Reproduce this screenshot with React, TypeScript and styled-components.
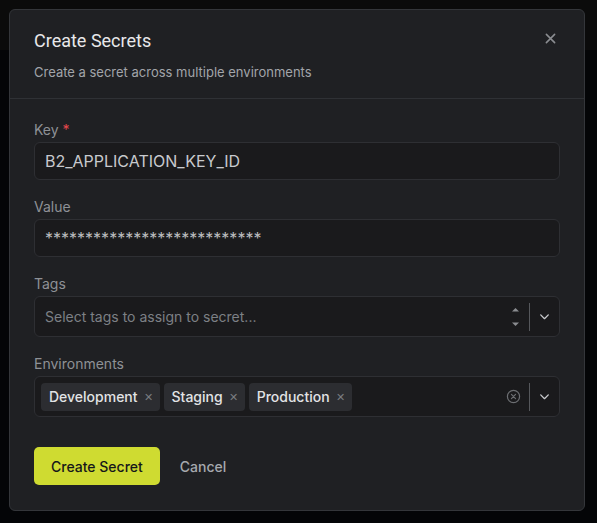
import styled, { createGlobalStyle } from "styled-components";

const GlobalStyle = createGlobalStyle`
  * { box-sizing: border-box; }
  body {
    margin: 0;
    background: #040507;
    font-family: Inter, "Noto Sans", sans-serif;
  }
`;

const Page = styled.div`
  position: relative;
  width: 597px;
  height: 523px;
  overflow: hidden;
  background: #040507;
`;

const TopBar = styled.div`
  height: 50px;
  background: #0b0b0b;
`;

const Dialog = styled.div`
  position: absolute;
  top: 9px;
  left: 9px;
  width: 576px;
  height: 502px;
  background: #1f2023;
  border: 1px solid #34363a;
  border-radius: 6px;
  display: flex;
  flex-direction: column;
`;

const Header = styled.div`
  position: relative;
  padding: 19px 24px 17px;
  border-bottom: 1px solid #2f3135;
`;

const Title = styled.h2`
  margin: 0;
  font-family: Roboto, Inter, sans-serif;
  font-size: 18px;
  line-height: 24px;
  font-weight: 400;
  color: #e8e8ea;
`;

const Subtitle = styled.p`
  margin: 10px 0 0;
  font-size: 13px;
  line-height: 18px;
  color: #a2a5aa;
`;

const CloseBtn = styled.button`
  position: absolute;
  top: 20px;
  right: 26px;
  width: 16px;
  height: 16px;
  padding: 0;
  border: none;
  background: none;
  display: flex;
  align-items: center;
  justify-content: center;
  cursor: pointer;
`;

const Body = styled.div`
  padding: 21px 24px 0;
  display: flex;
  flex-direction: column;
  gap: 17px;
`;

const Field = styled.div`
  display: flex;
  flex-direction: column;
  gap: 2px;
`;

const Label = styled.label`
  font-size: 14px;
  line-height: 20px;
  color: #8e9196;
`;

const Required = styled.span`
  color: #e5484d;
  margin-left: 4px;
`;

const Input = styled.div<{ $masked?: boolean }>`
  height: 38px;
  background: #1a1a1c;
  border: 1px solid #2e2f33;
  border-radius: 6px;
  padding: 0 10px;
  display: flex;
  align-items: center;
  font-size: 16px;
  color: ${({ $masked }) => ($masked ? "#bcbdbf" : "#c8cace")};
`;

const SelectBox = styled.div`
  height: 41px;
  background: #1a1a1c;
  border: 1px solid #2e2f33;
  border-radius: 6px;
  display: flex;
  align-items: center;
  padding-left: 6px;
`;

const ValueArea = styled.div`
  flex: 1;
  display: flex;
  align-items: center;
  gap: 4px;
  min-width: 0;
`;

const Placeholder = styled.span`
  padding-left: 4px;
  font-size: 14px;
  color: #7d8085;
`;

const Chip = styled.span`
  height: 28px;
  display: inline-flex;
  align-items: center;
  gap: 6px;
  padding: 0 7px 0 8px;
  background: #2c2d31;
  border-radius: 4px;
  font-size: 14px;
  font-weight: 500;
  color: #e2e3e5;
`;

const ChipX = styled.span`
  font-size: 11px;
  color: #7a7c80;
`;

const Indicators = styled.div`
  display: flex;
  align-items: center;
  height: 100%;
`;

const SideIcon = styled.span<{ $wide?: boolean }>`
  display: flex;
  align-items: center;
  justify-content: center;
  width: 22px;
  margin-right: ${({ $wide }) => ($wide ? "5px" : "3px")};
`;

const Divider = styled.span`
  width: 1px;
  height: 28px;
  background: #55575b;
`;

const ChevronBox = styled.span`
  width: 29px;
  display: flex;
  align-items: center;
  justify-content: center;
`;

const Actions = styled.div`
  display: flex;
  align-items: center;
  gap: 5px;
  padding: 30px 24px 0;
`;

const PrimaryBtn = styled.button`
  height: 38px;
  padding: 0 17px;
  background: #cfdb31;
  border: none;
  border-radius: 5px;
  font-family: inherit;
  font-size: 14px;
  font-weight: 500;
  color: #16171a;
`;

const GhostBtn = styled.button`
  height: 38px;
  padding: 0 15px;
  background: none;
  border: none;
  font-family: inherit;
  font-size: 14px;
  font-weight: 500;
  color: #a6a9ae;
`;

const Chevron = () => (
  <svg width="13" height="13" viewBox="0 0 24 24" fill="none" stroke="#c9cbce" strokeWidth="2.4" strokeLinecap="round" strokeLinejoin="round">
    <path d="M5 9l7 7 7-7" />
  </svg>
);

const envs = ["Development", "Staging", "Production"];

export default function App() {
  return (
    <>
      <GlobalStyle />
      <Page>
        <TopBar />
        <Dialog>
          <Header>
            <Title>Create Secrets</Title>
            <Subtitle>Create a secret across multiple environments</Subtitle>
            <CloseBtn aria-label="Close">
              <svg width="11" height="11" viewBox="0 0 12 12" stroke="#8b8d91" strokeWidth="1.7" strokeLinecap="round">
                <path d="M1.5 1.5l9 9M10.5 1.5l-9 9" />
              </svg>
            </CloseBtn>
          </Header>
          <Body>
            <Field>
              <Label>
                Key<Required>*</Required>
              </Label>
              <Input>B2_APPLICATION_KEY_ID</Input>
            </Field>
            <Field>
              <Label>Value</Label>
              <Input $masked>***************************</Input>
            </Field>
            <Field>
              <Label>Tags</Label>
              <SelectBox>
                <ValueArea>
                  <Placeholder>Select tags to assign to secret...</Placeholder>
                </ValueArea>
                <Indicators>
                  <SideIcon>
                    <svg width="9" height="22" viewBox="0 0 9 22" fill="#8a8c90">
                      <path d="M1 5.5L4.5 2 8 5.5z" />
                      <path d="M1 16.5L4.5 20 8 16.5z" />
                    </svg>
                  </SideIcon>
                  <Divider />
                  <ChevronBox>
                    <Chevron />
                  </ChevronBox>
                </Indicators>
              </SelectBox>
            </Field>
            <Field>
              <Label>Environments</Label>
              <SelectBox>
                <ValueArea>
                  {envs.map((env) => (
                    <Chip key={env}>
                      {env}
                      <ChipX>✕</ChipX>
                    </Chip>
                  ))}
                </ValueArea>
                <Indicators>
                  <SideIcon $wide>
                    <svg width="15" height="15" viewBox="0 0 16 16" fill="none" stroke="#6c6e72" strokeWidth="1.3" strokeLinecap="round">
                      <circle cx="8" cy="8" r="6.5" />
                      <path d="M5.8 5.8l4.4 4.4M10.2 5.8l-4.4 4.4" />
                    </svg>
                  </SideIcon>
                  <Divider />
                  <ChevronBox>
                    <Chevron />
                  </ChevronBox>
                </Indicators>
              </SelectBox>
            </Field>
          </Body>
          <Actions>
            <PrimaryBtn>Create Secret</PrimaryBtn>
            <GhostBtn>Cancel</GhostBtn>
          </Actions>
        </Dialog>
      </Page>
    </>
  );
}
